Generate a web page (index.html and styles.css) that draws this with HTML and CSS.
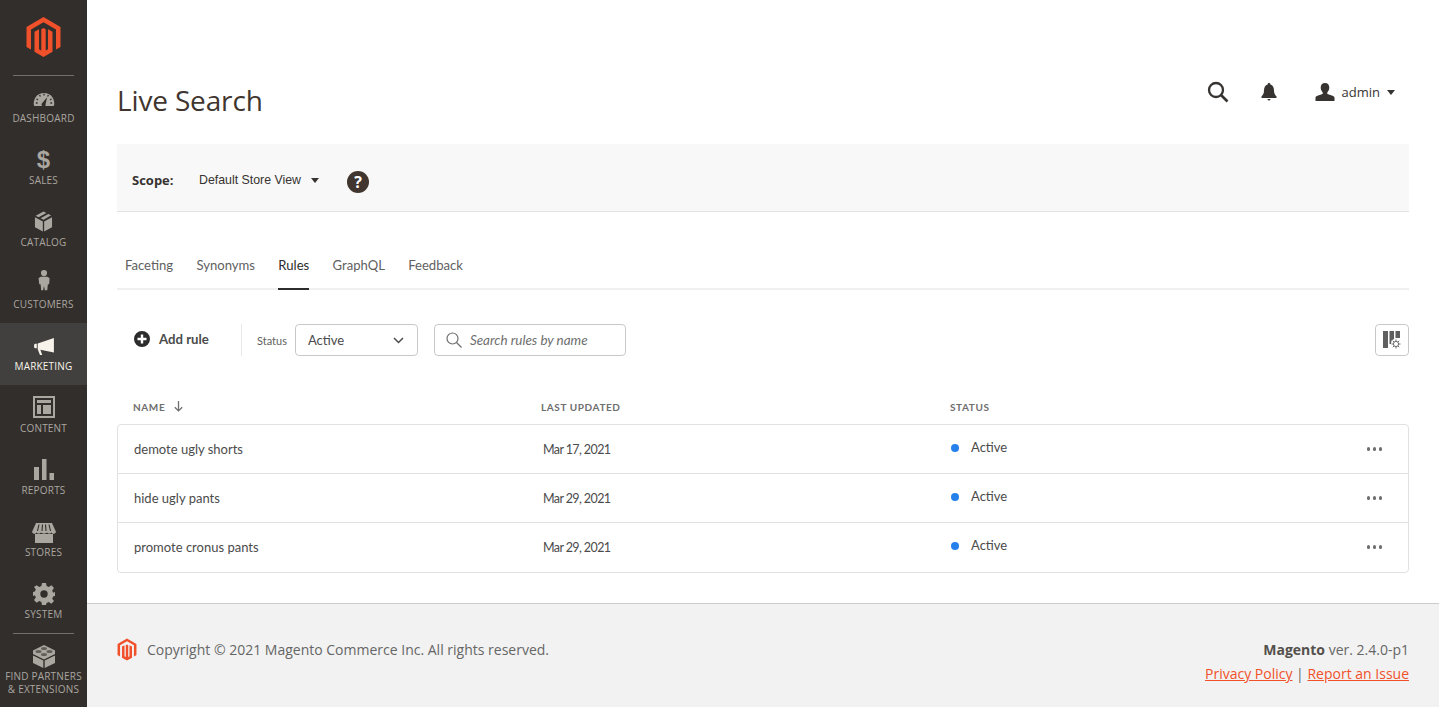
FILE: index.html
```html
<!DOCTYPE html>
<html lang="en">
<head>
  <meta charset="UTF-8">
  <title>Live Search</title>
  <link rel="stylesheet" href="styles.css">
</head>
<body>

<div class="page">
  <nav class="sidebar">
    <div class="logo">
      <svg width="35" height="40" viewBox="0.500 0 35 40"><path fill="#f1512a" d="M18 0 L35 10 V30 L30.500 32.600 V12.500 L18 5.300 L5.500 12.500 V32.600 L1 30 V10 Z"/><path fill="#f1512a" d="M18 40 L9 34.800 V14.800 L13.500 12.200 V32.200 L15.800 33.500 V12.200 L18 11 L20.200 12.200 V33.500 L22.500 32.200 V12.200 L27 14.800 V34.800 Z"/></svg>
    </div>
    <a class="nav-item">
      <svg class="lift-2" width="22" height="16" viewBox="0 0 24 18"><path fill="#aaa6a0" d="M1 17 A11.500 11.500 0 1 1 23 17 Z"/><path stroke="#322e2b" stroke-width="1.500" fill="none" d="M12 3v2M7 4.500l1 1.700M17 4.500l-1 1.700M3.500 9l1.700 1M20.500 9l-1.700 1M2.800 13.500h2M21.200 13.500h-2"/><path fill="#322e2b" d="M15.500 7 L13.800 14.500 A2.300 2.300 0 1 1 10 13.500 Z"/></svg>
      <span>Dashboard</span>
    </a>
    <a class="nav-item">
      <span class="nav-glyph">$</span>
      <span>Sales</span>
    </a>
    <a class="nav-item">
      <svg class="lift-1" width="19" height="21" viewBox="0 0 20 22"><path fill="#aaa6a0" d="M1 6.500 9.300 11v10.500L1 17zM19 6.500 10.700 11v10.500L19 17zM10 0.500l3 1.500-8.200 4.600-3-1.600zM15 3l3 1.500-8 4.600-3-1.600z"/></svg>
      <span>Catalog</span>
    </a>
    <a class="nav-item">
      <svg class="lift-2" width="12" height="25" viewBox="0 0 14 25"><circle cx="7" cy="3.800" r="3.600" fill="#aaa6a0"/><path fill="#aaa6a0" d="M3 8h8l2.500 2-.5 7-1.500 0-.7 7H8L7 19l-1 5H3.700L3 17l-1.500 0-.9-7z"/></svg>
      <span>Customers</span>
    </a>
    <a class="nav-item active">
      <svg class="lift-1" width="22" height="18" viewBox="0 0 22 20"><path fill="#f7f3eb" d="M22 0V16L7 13 9 19H6.500L4 12.500V6ZM3 6.500V11.500H1.500A1.500 1.500 0 0 1 0 10V8A1.500 1.500 0 0 1 1.500 6.500Z"/></svg>
      <span>Marketing</span>
    </a>
    <a class="nav-item">
      <svg class="lift-1" width="22" height="22" viewBox="0 0 22 22"><path fill="#aaa6a0" fill-rule="evenodd" d="M0 0H22V22H0ZM2 2V20H20V2ZM4 4H18V7H4ZM4 9H8V18H4ZM10 9H18V18H10Z"/></svg>
      <span>Content</span>
    </a>
    <a class="nav-item">
      <svg width="20" height="22" viewBox="0 0 20 22"><path fill="#aaa6a0" d="M0 8H5V21H0ZM8 0H12.500V21H8ZM15.500 14H20V21H15.500Z"/></svg>
      <span>Reports</span>
    </a>
    <a class="nav-item">
      <svg width="24" height="20" viewBox="0 0 24 20"><path fill="#aaa6a0" d="M3 11H21V20H3ZM4 0H20L24 9C23 11.500 20 11 19.500 9.500 18.500 11 16 11 15 9.500 14 11 10 11 9 9.500 8 11 5.500 11 4.500 9.500 4 11 1 11.500 0 9Z"/><path stroke="#322e2b" stroke-width="1.100" fill="none" d="M7 1.500 5.500 8M10.500 1.500 10 8M13.500 1.500 14 8M17 1.500 18.500 8"/></svg>
      <span>Stores</span>
    </a>
    <a class="nav-item">
      <svg width="22" height="22" viewBox="0 0 22 22"><path fill="#aaa6a0" fill-rule="evenodd" d="M9 0h4l.6 3.100 2.200.9L18.400 2.200 21 5l-1.800 2.600.9 2.200L22 9v4l-1.900.6-.9 2.200L21 18l-2.600 2.800-2.600-1.800-2.200.9L13 22H9l-.6-3.100-2.200-.9L3.600 19.800 1 17l1.800-2.600-.9-2.200L0 13V9l1.900-.6.9-2.200L1 4l2.600-1.800L6.200 4l2.200-.9ZM11 7.300a3.700 3.700 0 1 0 0 7.400 3.700 3.700 0 0 0 0-7.400Z"/></svg>
      <span>System</span>
    </a>
    <div class="nav-rule"></div>
    <a class="nav-item partners">
      <svg width="24" height="23" viewBox="0 0 24 23"><path fill="#aaa6a0" d="M12 0 23 5.500V9L12 14.500 1 9V5.500Z"/><path fill="#aaa6a0" d="M1 10.500 11.300 15.500V23L1 18ZM23 10.500 12.700 15.500V23L23 18Z"/><ellipse cx="12" cy="3.500" rx="3" ry="1.500" fill="#322e2b" opacity=".6"/><ellipse cx="6.500" cy="6.500" rx="3" ry="1.500" fill="#322e2b" opacity=".6"/><ellipse cx="17.500" cy="6.500" rx="3" ry="1.500" fill="#322e2b" opacity=".6"/><ellipse cx="12" cy="9.500" rx="3" ry="1.500" fill="#322e2b" opacity=".6"/></svg>
      <span>Find Partners<br>&amp; Extensions</span>
    </a>
  </nav>

  <div class="main">
    <div class="content">
      <header class="page-head">
        <h1>Live Search</h1>
        <div class="head-actions">
          <svg class="head-search" width="22" height="22" viewBox="0 0 22 22"><circle cx="9" cy="9" r="7" fill="none" stroke="#373330" stroke-width="2.300"/><path d="M14 14l6.500 6.500" stroke="#373330" stroke-width="2.600"/></svg>
          <svg class="head-bell" width="16" height="18" viewBox="0 0 16 18"><path fill="#373330" d="M8 0a1.300 1.300 0 0 1 1.300 1.500C12 2.200 13 4.500 13 7.500c0 3 1 4.500 2.500 6V15H.500v-1.500C2 12 3 10.500 3 7.500c0-3 1-5.300 3.700-6A1.300 1.300 0 0 1 8 0ZM6.500 16h3a1.500 1.500 0 0 1-3 0Z"/></svg>
          <div class="head-user">
            <svg width="20" height="18" viewBox="0 0 20 18"><path fill="#373330" d="M10 0c2.800 0 4.300 2 4.300 4.600 0 2-.8 3.700-2 4.800v1.600c2.500 1 6.700 1.700 7.200 3.500V18H.500v-3.500c.5-1.800 4.700-2.500 7.200-3.500V9.400c-1.200-1.100-2-2.800-2-4.800C5.700 2 7.200 0 10 0Z"/></svg>
            <span>admin</span>
            <i class="caret"></i>
          </div>
        </div>
      </header>

      <div class="scope-bar">
        <b class="scope-label">Scope:</b>
        <span class="scope-value">Default Store View</span>
        <i class="caret"></i>
        <span class="help">?</span>
      </div>

      <div class="tabs">
        <a class="tab">Faceting</a>
        <a class="tab">Synonyms</a>
        <a class="tab on">Rules</a>
        <a class="tab">GraphQL</a>
        <a class="tab">Feedback</a>
      </div>

      <div class="toolbar">
        <a class="add-rule">
          <svg width="16" height="16" viewBox="0 0 16 16"><path fill="#2c2c2c" fill-rule="evenodd" d="M8 0a8 8 0 1 0 0 16A8 8 0 0 0 8 0ZM6.800 3.500h2.400v3.300h3.300v2.400H9.200v3.300H6.800V9.200H3.500V6.800h3.300Z"/></svg>
          <span>Add rule</span>
        </a>
        <span class="status-label">Status</span>
        <div class="status-select">
          <span>Active</span>
          <svg width="11" height="7" viewBox="0 0 11 7"><path d="M1 1l4.500 4.500L10 1" fill="none" stroke="#4b4b4b" stroke-width="1.500"/></svg>
        </div>
        <div class="search-box">
          <svg width="16" height="16" viewBox="0 0 16 16"><circle cx="6.500" cy="6.500" r="5.500" fill="none" stroke="#6e6e6e" stroke-width="1.200"/><path d="M10.500 10.500l5 5" stroke="#6e6e6e" stroke-width="1.300"/></svg>
          <span>Search rules by name</span>
        </div>
        <div class="col-button">
          <svg width="18" height="18" viewBox="0 0 18 18"><path fill="#5f5f5f" d="M0 0H5V17H0ZM6.500 0H11V8L8.500 9.500 8 13H6.500ZM12.500 0H17V7H12.500Z"/><g fill="none" stroke="#5f5f5f" stroke-width=".9"><circle cx="13" cy="13" r="2.600"/><path d="M13 8.500v1.800M13 15.700v1.800M8.500 13h1.800M15.700 13h1.800M9.800 9.800l1.300 1.300M14.900 14.900l1.300 1.300M16.200 9.800l-1.300 1.300M11.100 14.900l-1.300 1.300"/></g></svg>
        </div>
      </div>

      <div class="table-head">
        <span class="col-name">Name <svg width="9" height="11" viewBox="0 0 9 11"><path d="M4.500 0v10M.8 6.200l3.700 3.700 3.700-3.700" fill="none" stroke="#6e6e6e" stroke-width="1.300"/></svg></span>
        <span class="col-date">Last updated</span>
        <span class="col-status">Status</span>
      </div>
      <div class="rules">
        <div class="rule">
          <span class="col-name">demote ugly shorts</span>
          <span class="col-date">Mar 17, 2021</span>
          <span class="col-status"><i class="dot"></i>Active</span>
          <span class="more"><i></i><i></i><i></i></span>
        </div>
        <div class="rule">
          <span class="col-name">hide ugly pants</span>
          <span class="col-date">Mar 29, 2021</span>
          <span class="col-status"><i class="dot"></i>Active</span>
          <span class="more"><i></i><i></i><i></i></span>
        </div>
        <div class="rule">
          <span class="col-name">promote cronus pants</span>
          <span class="col-date">Mar 29, 2021</span>
          <span class="col-status"><i class="dot"></i>Active</span>
          <span class="more"><i></i><i></i><i></i></span>
        </div>
      </div>
    </div>

    <footer class="footer">
      <div class="copyright">
        <svg width="20" height="23" viewBox="0 0 36 40"><path fill="#f1512a" d="M18 0 L35 10 V30 L30.500 32.600 V12.500 L18 5.300 L5.500 12.500 V32.600 L1 30 V10 Z"/><path fill="#f1512a" d="M18 40 L9 34.800 V14.800 L13.500 12.200 V32.200 L15.800 33.500 V12.200 L18 11 L20.200 12.200 V33.500 L22.500 32.200 V12.200 L27 14.800 V34.800 Z"/></svg>
        <span>Copyright © 2021 Magento Commerce Inc. All rights reserved.</span>
      </div>
      <div class="legal">
        <div><b>Magento</b> ver. 2.4.0-p1</div>
        <div class="legal-links"><a>Privacy Policy</a> | <a>Report an Issue</a></div>
      </div>
    </footer>
  </div>
</div>

</body>
</html>
```

FILE: styles.css
```css
* {
  box-sizing: border-box;
}

body {
  margin: 0;
  font-family: "Open Sans", sans-serif;
  color: #373330;
  background: white;
}

.page {
  display: flex;
  height: 707px;
  overflow: hidden;
}

/* sidebar */
.sidebar {
  width: 87px;
  flex: none;
  background: #322e2b;
  display: flex;
  flex-direction: column;
}

.logo {
  height: 75px;
  margin: 0 13px;
  padding-top: 17px;
  display: flex;
  justify-content: center;
  align-items: flex-start;
  position: relative;
}

.logo::after {
  content: "";
  position: absolute;
  left: 0;
  right: 0;
  bottom: -1px;
  border-bottom: 1px solid #736e69;
}

.nav-item {
  height: 62px;
  display: flex;
  flex-direction: column;
  align-items: center;
  justify-content: flex-end;
  gap: 2px;
  padding-bottom: 12px;
  color: #aaa6a0;
  font-size: 10px;
  line-height: 14px;
  text-transform: uppercase;
  letter-spacing: 0.2px;
}

.nav-item.active {
  background: #41403e;
  color: #f7f3eb;
}

.lift-1 {
  margin-bottom: 1px;
}

.lift-2 {
  margin-bottom: 2px;
}

.nav-glyph {
  font-size: 24px;
  line-height: 24px;
  font-weight: 700;
  font-family: "Liberation Sans", sans-serif;
  margin-bottom: -1px;
}

.nav-rule {
  height: 1px;
  margin: 0 13px -1px;
  background: #736e69;
}

.partners {
  height: 74px;
  text-align: center;
  line-height: 13px;
  white-space: nowrap;
  padding-bottom: 11px;
}

.main {
  flex: 1;
  display: flex;
  flex-direction: column;
  min-width: 0;
}

.content {
  flex: 1;
  padding: 0 30px;
}

/* page header */
.page-head {
  height: 144px;
  display: flex;
  justify-content: space-between;
  align-items: flex-start;
}

h1 {
  margin: 80px 0 0;
  font-size: 28px;
  line-height: 40px;
  font-weight: 400;
  letter-spacing: -0.150px;
  color: #41362f;
}

.head-actions {
  display: flex;
  align-items: center;
  margin-top: 81px;
  padding-right: 14px;
}

.head-bell {
  margin-left: 32px;
}

.head-user {
  display: flex;
  align-items: center;
  margin-left: 38px;
  font-size: 13px;
}

.head-user span {
  margin: 0 7px;
}

.caret {
  width: 0;
  height: 0;
  border-left: 4.500px solid transparent;
  border-right: 4.500px solid transparent;
  border-top: 5px solid #373330;
}

/* scope */
.scope-bar {
  height: 68px;
  background: #f8f8f8;
  border-bottom: 1px solid #e3e3e3;
  display: flex;
  align-items: center;
  padding: 5px 0 0 15px;
  font-size: 13px;
}

.scope-label {
  font-weight: 700;
  width: 67px;
}

.scope-value {
  font-family: "Liberation Sans", sans-serif;
  font-size: 12.350px;
  margin-right: 10px;
}

.help {
  width: 22px;
  height: 22px;
  margin: 3px 0 0 28px;
  border-radius: 50%;
  background: #41362f;
  color: white;
  font-size: 16px;
  font-weight: 700;
  line-height: 22px;
  text-align: center;
}

/* tabs */
.tabs {
  height: 78px;
  display: flex;
  align-items: flex-end;
  gap: 23.300px;
  padding-left: 8px;
  border-bottom: 2px solid #f0f0f0;
  font-family: "Lato", sans-serif;
  font-size: 13.100px;
}

.tab {
  height: 39px;
  margin-bottom: -2px;
  color: #5f5f5f;
  line-height: 28px;
  border-bottom: 2px solid transparent;
}

.tab.on {
  color: #2c2c2c;
  border-bottom-color: #2c2c2c;
}

/* toolbar */
.toolbar {
  display: flex;
  align-items: center;
  height: 32px;
  margin-top: 34px;
  font-family: "Lato", sans-serif;
  font-size: 13px;
}

.add-rule {
  display: flex;
  align-items: center;
  gap: 9px;
  width: 125px;
  height: 32px;
  padding: 0 0 2px 17px;
  border-right: 1px solid #e8e8e8;
  font-size: 13.200px;
  font-weight: 700;
  color: #4b4b4b;
}

.status-label {
  font-size: 11px;
  color: #5f5f5f;
  margin: 0 8px 0 15px;
}

.status-select {
  width: 123px;
  height: 32px;
  display: flex;
  align-items: center;
  justify-content: space-between;
  padding: 0 13px 0 12px;
  border: 1px solid #c9c9c9;
  border-radius: 4px;
  color: #4b4b4b;
}

.search-box {
  width: 192px;
  height: 32px;
  margin-left: 16px;
  display: flex;
  align-items: center;
  gap: 8px;
  padding-left: 11px;
  border: 1px solid #c9c9c9;
  border-radius: 4px;
  color: #6e6e6e;
  font-size: 13.450px;
  font-style: italic;
}

.col-button {
  width: 34px;
  height: 32px;
  margin-left: auto;
  display: flex;
  align-items: center;
  justify-content: center;
  border: 1px solid #c9c9c9;
  border-radius: 4px;
}

/* rules table */
.table-head,
.rule {
  display: grid;
  align-items: center;
}

.table-head {
  grid-template-columns: 408px 409px 1fr;
  height: 68px;
  padding: 34px 0 0 16px;
  font-family: "Lato", sans-serif;
  font-size: 10px;
  font-weight: 700;
  letter-spacing: 0.6px;
  text-transform: uppercase;
  color: #6e6e6e;
}

.table-head svg {
  margin-left: 6px;
  vertical-align: -1px;
}

.rules {
  border: 1px solid #e1e1e1;
  border-radius: 4px;
  font-family: "Lato", sans-serif;
  font-size: 13px;
  color: #4b4b4b;
}

.rule {
  grid-template-columns: 409px 408px 1fr;
  height: 49px;
  padding-left: 16px;
  border-bottom: 1px solid #e1e1e1;
  position: relative;
}

.rule:last-child {
  border-bottom: none;
  padding-bottom: 1px;
}

.rule .col-date {
  font-size: 12.500px;
  letter-spacing: -0.600px;
}

.dot {
  display: inline-block;
  width: 8px;
  height: 8px;
  border-radius: 50%;
  background: #2680eb;
  margin-right: 12px;
}

.rule .col-status {
  margin-top: -4px;
}

.more {
  position: absolute;
  right: 26px;
  top: 22px;
  display: flex;
  gap: 2.500px;
}

.more i {
  width: 3.500px;
  height: 3.500px;
  border-radius: 50%;
  background: #6e6e6e;
}

/* footer */
.footer {
  height: 104px;
  background: #f2f2f2;
  border-top: 1px solid #ccc;
  display: flex;
  justify-content: space-between;
  padding: 34px 30px 0;
  font-size: 14px;
  color: #666;
}

.copyright {
  display: flex;
  align-items: flex-start;
  gap: 10px;
  line-height: 24px;
}

.legal {
  text-align: right;
  line-height: 24px;
}

.legal b {
  color: #54504c;
}

.legal-links a {
  color: #f1512a;
  text-decoration: underline;
}
```
